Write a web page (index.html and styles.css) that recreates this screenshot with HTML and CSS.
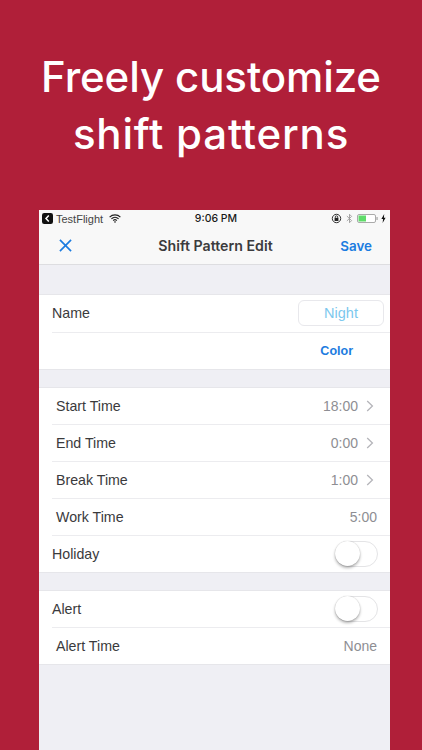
FILE: index.html
```html
<!DOCTYPE html>
<html lang="en">
<head>
<meta charset="utf-8">
<title>Shift Pattern Edit</title>
<link rel="stylesheet" href="styles.css">
</head>
<body>
<main class="screen">
  <h1 class="headline">Freely customize<br><span class="headline-second">shift patterns</span></h1>
  <section class="phone">
    <header class="chrome">
      <div class="status">
        <div class="status-left">
          <svg class="back-badge" viewBox="0 0 11 11"><rect width="11" height="11" rx="2.2" fill="#111"/><path d="M6.8 2.6 4 5.5l2.8 2.9" fill="none" stroke="#fff" stroke-width="1.5"/></svg>
          <span>TestFlight</span>
          <svg class="wifi" viewBox="0 0 12 9"><path d="M.6 3.1a7.8 7.8 0 0 1 10.8 0M2.4 4.9a5.2 5.2 0 0 1 7.2 0M4.2 6.6a2.6 2.6 0 0 1 3.6 0" fill="none" stroke="#222" stroke-width="1.2"/><path d="M6 9 4.9 7.8a1.6 1.6 0 0 1 2.2 0z" fill="#222"/></svg>
        </div>
        <div class="status-time">9:06 PM</div>
        <div class="status-right">
          <svg class="lock" viewBox="0 0 12 12"><circle cx="6" cy="6" r="4.6" fill="none" stroke="#222" stroke-width="1"/><rect x="3.9" y="5.3" width="4.2" height="3.4" fill="#222"/><path d="M4.7 5.4V4.4a1.3 1.3 0 0 1 2.6 0v1" fill="none" stroke="#222" stroke-width=".9"/></svg>
          <svg class="bt" viewBox="0 0 8 12"><path d="M1 3.2 6.4 8.4 4 10.8V1.2l2.4 2.4L1 8.8" fill="none" stroke="#999" stroke-width="1"/></svg>
          <svg class="battery" viewBox="0 0 21 9"><rect x=".5" y=".5" width="18" height="8" rx="1.5" fill="#fff" stroke="#aaa"/><rect x="1.5" y="1.5" width="7.5" height="6" fill="#5fdc6a"/><rect x="19.4" y="3" width="1.3" height="3" fill="#aaa"/></svg>
          <svg class="bolt" viewBox="0 0 5 9"><path d="M3.2 0 .4 5h1.7L1.6 9l3-5.2H2.9z" fill="#111"/></svg>
        </div>
      </div>
      <nav class="navbar">
        <svg class="close" viewBox="0 0 14 14"><path d="M1 1l12 12M13 1 1 13" fill="none" stroke="#1c7ce0" stroke-width="1.8"/></svg>
        <div class="nav-title">Shift Pattern Edit</div>
        <div class="nav-save">Save</div>
      </nav>
    </header>

    <div class="group first">
      <div class="row name-row">
        <span class="label flush">Name</span>
        <span class="name-field">Night</span>
      </div>
      <div class="row color-row"><span class="color">Color</span></div>
    </div>

    <div class="group">
      <div class="row"><span class="label">Start Time</span><span class="value">18:00</span><svg class="chev" viewBox="0 0 8 12"><path d="M1.2 1 6.4 6l-5.2 5" fill="none" stroke="#b5b5ba" stroke-width="1.3"/></svg></div>
      <div class="row"><span class="label">End Time</span><span class="value">0:00</span><svg class="chev" viewBox="0 0 8 12"><path d="M1.2 1 6.4 6l-5.2 5" fill="none" stroke="#b5b5ba" stroke-width="1.3"/></svg></div>
      <div class="row"><span class="label">Break Time</span><span class="value">1:00</span><svg class="chev" viewBox="0 0 8 12"><path d="M1.2 1 6.4 6l-5.2 5" fill="none" stroke="#b5b5ba" stroke-width="1.3"/></svg></div>
      <div class="row"><span class="label">Work Time</span><span class="value">5:00</span></div>
      <div class="row"><span class="label flush">Holiday</span><span class="toggle"><span class="knob"></span></span></div>
    </div>

    <div class="group">
      <div class="row"><span class="label flush">Alert</span><span class="toggle"><span class="knob"></span></span></div>
      <div class="row"><span class="label">Alert Time</span><span class="value">None</span></div>
    </div>
  </section>
</main>
</body>
</html>
```
FILE: styles.css
```css
* { box-sizing: border-box; }
html, body { margin: 0; height: 750px; overflow: hidden; }
body { background: #b01f39; font-family: Inter, "Noto Sans", sans-serif; }
.screen { display: flex; flex-direction: column; height: 750px; }
.headline {
  margin: 48px 0 0;
  height: 162px;
  font-size: 42px;
  line-height: 57px;
  font-weight: 500;
  letter-spacing: -.1px;
  color: #fff;
  text-align: center;
}
.headline-second { letter-spacing: .8px; }
.phone { width: 351px; margin-left: 39px; flex: 1; background: #efeff4; font-family: "Liberation Sans", Arial, sans-serif; }
.chrome { height: 55px; background: #f8f8f8; border-bottom: 1px solid #dddde0; }
.status { display: grid; grid-template-columns: 1fr auto 1fr; align-items: center; height: 17px; padding: 0 4px 0 3px; font-size: 11px; color: #222; }
.status-left { display: flex; align-items: center; gap: 3px; color: #444; }
.status-left .wifi { margin-left: 3px; }
.back-badge { width: 11px; height: 11px; }
.wifi { width: 12px; height: 9px; }
.status-time { padding-left: 4px; font-family: Inter, "Liberation Sans", sans-serif; font-weight: 500; font-size: 10.5px; color: #1a1a1a; }
.status-right { display: flex; align-items: center; justify-content: flex-end; gap: 4px; }
.lock { width: 11px; height: 11px; }
.bt { width: 7px; height: 11px; }
.battery { width: 21px; height: 9px; margin-right: -1px; }
.bolt { width: 5px; height: 9px; }
.navbar { display: grid; grid-template-columns: 1fr auto 1fr; align-items: center; height: 37px; padding: 0 18px 0 20px; }
.close { width: 13px; height: 13px; }
.nav-title { font-family: Inter, "Liberation Sans", sans-serif; font-size: 14.2px; font-weight: 600; color: #3b3b3d; }
.nav-save { font-family: Inter, "Liberation Sans", sans-serif; font-size: 13.4px; font-weight: 600; color: #1c7ce0; justify-self: end; }
.group { margin-top: 17px; background: #fff; border-top: 1px solid #e6e6ea; border-bottom: 1px solid #e6e6ea; }
.group.first { margin-top: 29px; }
.row { display: flex; align-items: center; height: 36.8px; padding-right: 13px; margin-left: 13px; border-top: 1px solid #ececef; }
.row:first-child { border-top: 0; }
.label { font-size: 14.2px; color: #3a3a3c; padding-left: 4px; margin-right: auto; }
.label.flush { padding-left: 0; }
.value { font-size: 14px; color: #8e8e93; }
.chev { width: 8px; height: 12px; margin: 0 3px 0 8px; }
.name-row { padding-right: 6px; }
.name-field { width: 86px; height: 26px; border: 1px solid #e8e8ec; border-radius: 6px; display: flex; align-items: center; justify-content: center; font-size: 14.5px; color: #7cc8ee; }
.color-row { justify-content: flex-end; padding-right: 37px; }
.color { font-size: 12.5px; font-weight: 700; color: #1c7ce0; }
.toggle { position: relative; width: 43px; height: 26px; margin-right: -1px; border: 1px solid #e4e4e6; border-radius: 13px; background: #fff; }
.knob { position: absolute; left: -1px; top: -1px; width: 25px; height: 25px; border-radius: 50%; background: #fff; box-shadow: 0 2px 3px rgba(0,0,0,.3), 0 0 1px rgba(0,0,0,.25); }
```
